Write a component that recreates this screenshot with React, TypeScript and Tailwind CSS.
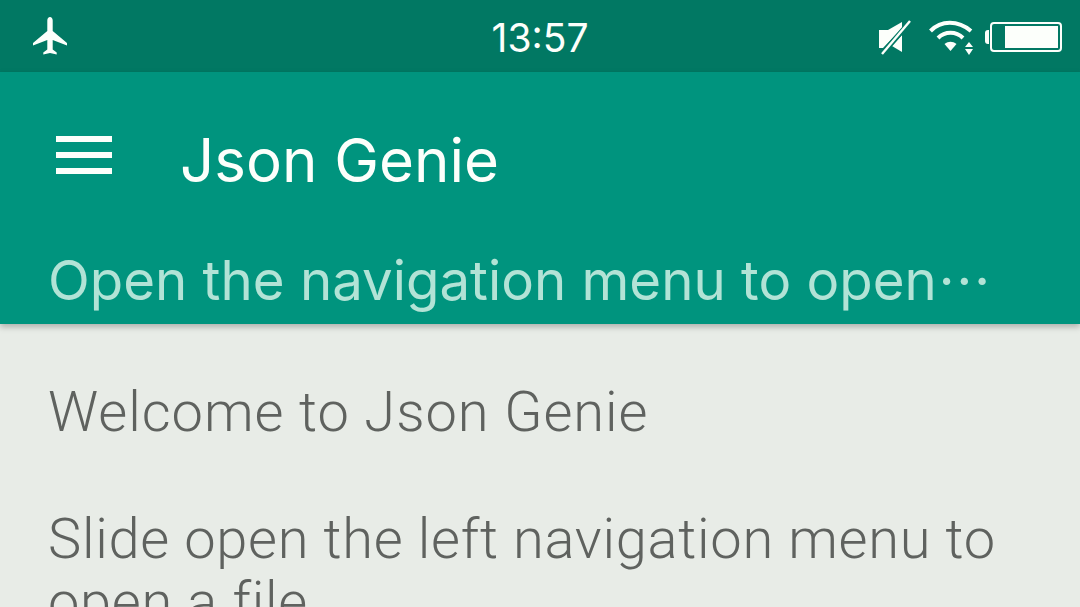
export default function App() {
  return (
    <div className="w-[1080px] h-[607px] overflow-hidden bg-[#e8ece7] flex flex-col font-['Inter',sans-serif]">
      <div className="h-[72px] shrink-0 bg-[#017863] flex items-center justify-between relative text-white">
        <svg className="ml-[32px]" width="36" height="40" viewBox="0 0 36 40" fill="#fcfffb">
          <path d="M18 1c1.500 0 2.700 1.500 2.700 3.500V15L35 27v2.500L20.700 24v9.500l4 3v2L18 37l-6.700 1.500v-2l4-3V24L1 29.500V27l14.300-12V4.500C15.300 2.500 16.500 1 18 1z" />
        </svg>
        <div className="absolute left-0 right-0 top-[18px] text-center text-[39px] leading-none text-[#fcfffb]">13:57</div>
        <div className="flex items-center mr-[18px] mt-[1px]">
          <svg width="34" height="36" viewBox="0 0 34 36" className="mr-[16px]">
            <path d="M1 11h9l14-8v6L5 29H1z" fill="#fcfffb" />
            <path d="M24 16v17l-10-6z" fill="#fcfffb" />
            <path d="M4 35L32 3" stroke="#017863" strokeWidth="5" />
            <path d="M4 35L32 2" stroke="#fcfffb" strokeWidth="2.400" />
          </svg>
          <svg width="48" height="36" viewBox="0 0 48 36" className="mr-[9px]" fill="none">
            <path d="M2.500 12C13 1 30 1 43 12" stroke="#fcfffb" strokeWidth="4" />
            <path d="M10 19c7-7 18-7 25 0" stroke="#fcfffb" strokeWidth="4" />
            <path d="M16.500 25c4-3 8-3 12 0l-6 7z" fill="#fcfffb" />
            <path d="M41 23l4 5h-8zM41 36l4-6h-8z" fill="#fcfffb" />
          </svg>
          <div className="w-[4px] h-[14px] bg-[#fcfffb] rounded-l-[3px]" />
          <div className="ml-[1px] w-[72px] h-[30px] rounded-[4px] border-2 border-[#fcfffb] flex justify-end p-[2px]">
            <div className="w-[53px] bg-[#fcfffb]" />
          </div>
        </div>
      </div>
      <header className="h-[252px] shrink-0 bg-[#00947e] shadow-[0_3px_6px_rgba(0,0,0,0.25)] relative z-10 flex flex-col">
        <div className="flex items-center h-[176px]">
          <div className="ml-[56px] w-[56px] flex flex-col gap-[10px] -mt-[10px]">
            <div className="h-[6px] bg-[#fcfffb]" />
            <div className="h-[6px] bg-[#fcfffb]" />
            <div className="h-[6px] bg-[#fcfffb]" />
          </div>
          <div className="ml-[68px] -mt-[1px] text-[60px] leading-none text-[#fcfffb]">Json Genie</div>
        </div>
        <div className="ml-[48px] text-[54.6px] leading-none text-[#b2e3d6] mt-[5px] whitespace-nowrap">
          Open the navigation menu to open<span className="ml-[2px] tracking-[2px]">···</span>
        </div>
      </header>
      <main className="px-[48px] pt-[60px] text-[#5f625f] text-[56px] leading-none font-light font-['Roboto',sans-serif]">
        <p className="whitespace-nowrap tracking-[0.95px]">Welcome to Json Genie</p>
        <p className="mt-[68px] leading-[63px] whitespace-nowrap tracking-[0.7px]">Slide open the left navigation menu to<br />open a file</p>
      </main>
    </div>
  );
}
